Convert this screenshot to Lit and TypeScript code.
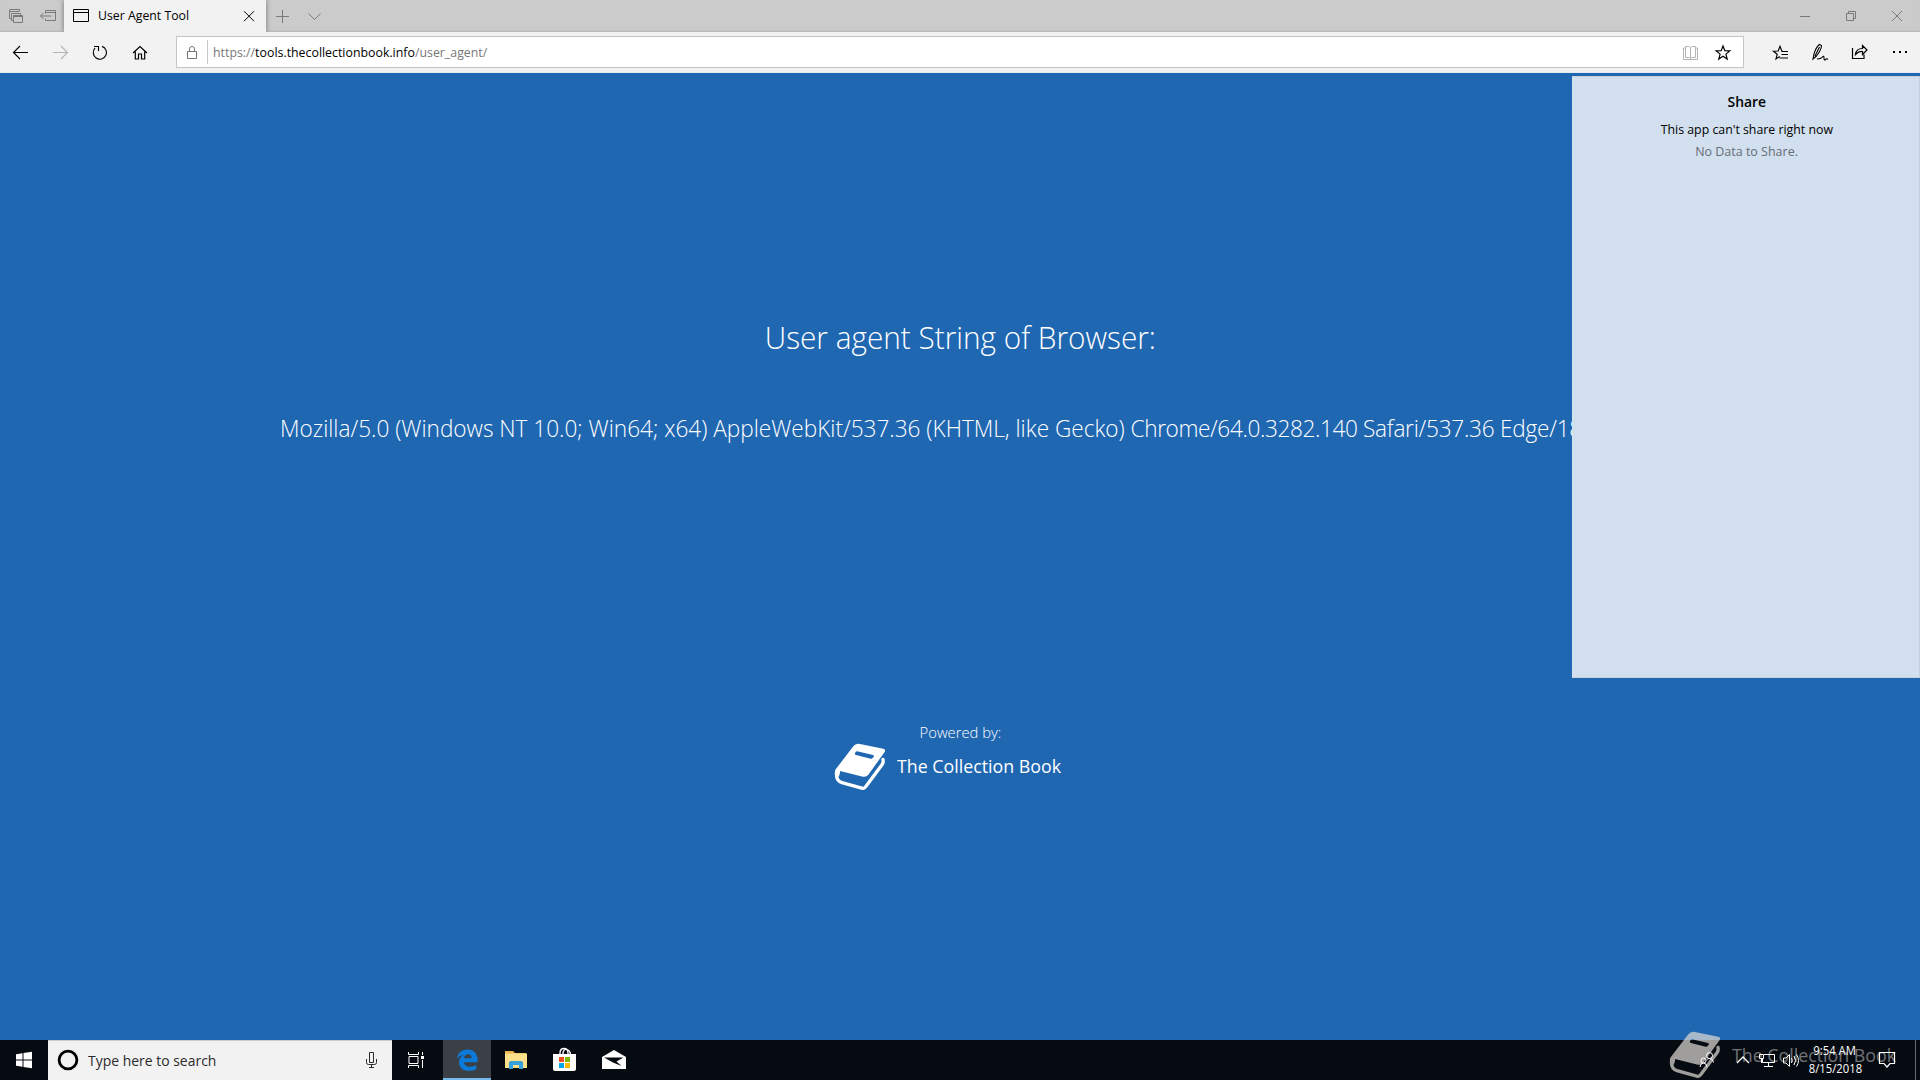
import { LitElement, html, svg, css, type SVGTemplateResult } from "lit";
import { customElement } from "lit/decorators.js";

/* Icons are drawn on the desktop's own pixel grid; x/y is the cell's origin on it. */
const cell = (x: number, y: number, w: number, h: number, body: SVGTemplateResult, cls = "") =>
  html`<svg class="cell ${cls}" width=${w} height=${h} viewBox="${x} ${y} ${w} ${h}">${body}</svg>`;

const book = html`<svg class="book" width="52" height="48" viewBox="102 99 156 144">
  <path fill="currentColor" fill-rule="evenodd" d="M176 101 L250 116 Q258 119 254 126 L205 194 Q199 202 189 200 L120 183 Q122 194 112 206 Q101 194 107 178 L160 109 Q166 100 176 101Z M171 124 Q167 124 165 129 Q163 134 168 135 L212 146 Q217 147 220 142 Q224 137 219 135Z"/>
  <path fill="none" stroke="currentColor" stroke-width="10" stroke-linejoin="round" stroke-linecap="round" d="M110 184 Q106 212 126 218 L188 235 Q193 236 197 230 L246 164 Q251 158 249 148"/>
</svg>`;

@customElement("app-root")
export class AppRoot extends LitElement {
  static styles = css`
    :host { display: block; width: 1920px; height: 1080px; overflow: hidden; font-family: "Open Sans", "Noto Sans", sans-serif; font-size: 12px; color: #000; }
    * { box-sizing: border-box; }
    .desktop { display: flex; flex-direction: column; width: 1920px; height: 1080px; position: relative; }
    .cell { display: block; flex: none; fill: none; stroke: currentColor; stroke-width: 1; }
    .t { white-space: pre; flex: none; }
    .spacer { flex: 1; }
    .tabs { display: flex; height: 32px; background: #cbcbcb; color: #7a7a7a; flex: none; box-shadow: inset 0 -2px 2px -1px #b5b5b5; }
    .tab { display: flex; align-items: center; width: 202px; height: 32px; background: #f2f2f2; color: #000; box-shadow: 0 0 5px rgba(0,0,0,.45); clip-path: inset(0 -6px 0 -6px); }
    .tab .name { width: 136px; padding-bottom: 2px; transform: scaleX(1.025); transform-origin: left; }
    .bar { display: flex; align-items: center; height: 41px; background: #f2f2f2; flex: none; border-bottom: 1px solid #e3ebf3; }
    .dim { color: #b4b4b4; }
    .grey { color: #777; }
    .address { display: flex; align-items: center; width: 1568px; height: 32px; border: 1px solid #c4c4c4; background: #fff; }
    .sep { width: 1px; height: 24px; background: #c8c8c8; margin-right: 5px; }
    .url { color: #777; transform: scaleX(1.029); transform-origin: left; }
    .url b { font-weight: 400; color: #000; }
    .page { flex: 1; background: #2067b2; color: #fff; display: flex; flex-direction: column; align-items: center; overflow: hidden; }
    .head { font-size: 32px; font-weight: 300; line-height: 44px; margin-top: 242px; transform: scaleX(.93); }
    .agent { font-size: 24px; font-weight: 300; line-height: 34px; margin-top: 52px; width: 1360px; transform: scaleX(.941); transform-origin: left; }
    .engine { letter-spacing: -.4px; }
    .build { letter-spacing: -.25px; }
    .powered { font-size: 15px; font-weight: 300; line-height: 20px; margin-top: 277px; transform: scaleX(.985); }
    .brand { display: flex; align-items: center; width: 252px; height: 48px; }
    .brand .book { margin-top: 2px; }
    .brand .t { font-size: 18px; margin-left: 11px; line-height: 24px; transform: scaleX(.988); transform-origin: left; padding-bottom: 1px; }
    .share { position: absolute; left: 1572px; top: 76px; width: 348px; height: 602px; padding-left: 1px; background: #d2dfee; border: 1px solid #c5d0dc; border-left-color: #d5e2ef; display: flex; flex-direction: column; align-items: center; }
    .share h2 { margin: 14px 0 0; font-size: 15px; font-weight: 600; line-height: 20px; transform: scaleX(.925); }
    .share .msg { font-size: 13px; line-height: 20px; margin-top: 8px; transform: scaleX(.948); }
    .share .sub { font-size: 13px; line-height: 20px; margin-top: 2px; color: #656d77; transform: scaleX(.96); }
    .task { display: flex; height: 40px; background: #060a11; color: #fff; flex: none; }
    .search { display: flex; align-items: center; width: 344px; background: #f2f2f2; color: #2b2b2b; border-top: 1px solid #c9ccd0; }
    .search .t { width: 262px; font-size: 15px; padding-bottom: 2px; transform: scaleX(.93); transform-origin: left; }
    .active { background: #3b3f46; box-shadow: inset 0 -2px #76b9ed; }
    .clock { width: 70px; padding-top: 2px; line-height: 18px; display: flex; flex-direction: column; align-items: center; }
    .clock .t { transform: scaleX(.94); }
    .mark { position: absolute; left: 1669px; top: 1031px; display: flex; align-items: center; color: #fff; height: 48px; }
    .mark .book { color: #dcd8d2; opacity: .72; }
    .mark .t { font-size: 18px; opacity: .42; margin-left: 11px; line-height: 24px; transform: scaleX(.988); transform-origin: left; }
    .front { z-index: 1; position: relative; display: flex; }
  `;

  render() {
    return html`<div class="desktop">
      <div class="tabs">
        ${cell(0, 0, 32, 32, svg`<path d="M11.5 18.5h-2v-9h10v2 M10 11.5h9 M13.500 20.5h-2v-7h9v2"/><path d="M13.500 15.5h9v7h-9z M13.500 16.5h9"/>`)}
        ${cell(32, 0, 32, 32, svg`<path d="M45.500 13.500v-3h10v10h-10v-2 M45 12.500h10 M51.500 16h-11 M43.500 13l-3 3 3 3"/>`)}
        <div class="tab">
          ${cell(64, 0, 34, 32, svg`<path d="M73.500 9.500h15v12h-15z M73.500 12.500h15"/>`)}
          <span class="t name">User Agent Tool</span>
          ${cell(234, 0, 32, 32, svg`<path d="M244 11.200l10 10 M254 11.200l-10 10"/>`)}
        </div>
        ${cell(266, 0, 32, 32, svg`<path d="M276 16.500h13 M282.500 10v13"/>`)}
        ${cell(298, 0, 32, 32, svg`<path d="M308.500 13.500l6 6 6-6"/>`)}
        <div class="spacer"></div>
        ${cell(1782, 0, 46, 32, svg`<path d="M1800 16.500h10"/>`)}
        ${cell(1828, 0, 46, 32, svg`<path d="M1846.500 13.500h7v7h-7z M1848.500 13v-1.500h7v7h-2"/>`)}
        ${cell(1874, 0, 46, 32, svg`<path d="M1892 11l10 10 M1902 11l-10 10"/>`)}
      </div>
      <div class="bar">
        ${cell(0, 32, 40, 40, svg`<path stroke-width="1.100" d="M13.500 52.500h14.500 M20 46l-6.500 6.500 6.500 6.500"/>`)}
        ${cell(40, 32, 40, 40, svg`<path stroke-width="1.100" d="M53 52.500h14.500 M61 46l6.500 6.500-6.500 6.500"/>`, "dim")}
        ${cell(80, 32, 40, 40, svg`<path stroke-width="1.150" d="M102 46.400A6.600 6.600 0 1 1 95 48.200"/><path stroke-width="1.150" d="M94 46.500h4.500v4.500"/>`)}
        ${cell(120, 32, 56, 40, svg`<path stroke-width="1.200" d="M133 53l7-6.500 7 6.500 M135.300 51.500v7.500h3.200v-5h3v5h3.200v-7.500"/>`)}
        <div class="address">
          ${cell(177, 37, 30, 30, svg`<path d="M187.500 51.500h9v7h-9z M189.500 51.500v-2.500a2.500 2.500 0 0 1 5 0v2.500"/>`, "grey")}
          <div class="sep"></div>
          <span class="t url">https://<b>tools.thecollectionbook.info</b>/user_agent/</span>
          <div class="spacer"></div>
          ${cell(1674, 37, 32, 30, svg`<path d="M1690.500 47.500q-1-1-2-1h-3v11h3q1.500 0 2 1q.5-1 2-1h3v-11h-3q-1.500 0-2 1v11 M1685.500 48h-2v11.500h14v-11.500h-2"/>`, "dim")}
          ${cell(1706, 37, 37, 30, svg`<path stroke-width="1.200" stroke-linejoin="miter" d="M1723 46l1.800 4.700 5 .2-3.900 3.200 1.300 5-4.200-2.800-4.200 2.800 1.300-5-3.900-3.200 5-.2z"/>`)}
        </div>
        <div class="spacer"></div>
        ${cell(1760, 32, 40, 40, svg`<path stroke-width="1.200" d="M1788 51.500h-6l-2-5.200-1.800 4.700-4.700.2 3.700 3.100-1.200 4.600 3.800-2.500 M1781.500 54.500h6.500 M1779.500 58h8.500"/>`)}
        ${cell(1800, 32, 40, 40, svg`<path stroke-width="1.100" d="M1813 59l1-5q2-7 5.500-9.500l2 1q0 4-5 10.500z M1815 56l4.500-9 M1817 59q4 0 5.500-2t1.500 1 1.500 1.500 2.500 0"/>`)}
        ${cell(1840, 32, 40, 40, svg`<path stroke-width="1.200" d="M1852.500 48v10.500h11.500v-4 M1855.500 54.500q.5-6 7-6v-3l4.500 4.500-4.500 4.500v-3q-4-.5-7 3z"/>`)}
        ${cell(1880, 32, 40, 40, svg`<path fill="currentColor" stroke="none" d="M1893 51h2v2h-2z M1899 51h2v2h-2z M1905 51h2v2h-2z"/>`)}
      </div>
      <div class="page">
        <div class="t head">User agent String of Browser:</div>
        <div class="t agent">Mozilla/5.0 (Windows NT 10.0; Win64; x64) AppleWebKit/537.36 (KHTML, like Gecko) <span class="engine">Chrome/64.0.3282.140 </span><span class="build">Safari/537.36 Edge/18</span></div>
        <div class="t powered">Powered by:</div>
        <div class="brand">${book}<span class="t">The Collection Book</span></div>
      </div>
      <div class="task">
        ${cell(0, 1040, 48, 40, svg`<path fill="currentColor" stroke="none" d="M16 1054.200l6.500-1v6.300h-6.500z M23.500 1053l8.500-1.200v7.700h-8.500z M16 1060.500h6.500v6.300l-6.500-1z M23.500 1060.500h8.500v7.700l-8.500-1.200z"/>`)}
        <div class="search">
          ${cell(48, 1041, 40, 39, svg`<circle cx="68" cy="1060" r="8.900" stroke="#000" stroke-width="2.800"/>`)}
          <span class="t">Type here to search</span>
          ${cell(350, 1041, 42, 39, svg`<path d="M369.500 1052.500h4v10h-4z M366.500 1059v3.500q0 2 2 2h6q2 0 2-2v-3.500 M371.500 1065v2.500 M369 1067.500h5"/>`)}
        </div>
        ${cell(392, 1040, 51, 40, svg`<path d="M409 1056.500h9v7h-9z M408.500 1052v2.500h10v-2.500 M408.500 1068v-2.500h10v2.500 M422.500 1052v3 M422.500 1060v8"/><path fill="#fff" stroke="none" d="M421 1056h3v3h-3z"/>`)}
        ${cell(443, 1040, 48, 40, svg`<path fill="#0c7ad8" stroke="none" d="M457 1058.500C458 1052.500 462.200 1049.500 467.500 1049.500C473.500 1049.500 477.600 1053.500 477.600 1059.500V1062.300H464C464.200 1065.500 467 1066.800 470 1066.800Q473.500 1066.800 476.300 1065V1069.200Q473 1070.800 469 1070.800C462.500 1070.800 459 1067 459 1062.200Q459 1057.300 463.800 1054.800Q459.500 1055.300 457 1058.500Z M464.200 1058.300H471.600C471.600 1055.800 470.500 1054.200 468 1054.200C465.500 1054.200 464.400 1056.200 464.200 1058.300Z" fill-rule="evenodd"/>`, "active")}
        ${cell(491, 1040, 48, 40, svg`<g stroke="none"><path fill="#e8b84f" d="M505 1051h8l2 2h11v3h-21z"/><path fill="#fbe08c" d="M505 1053.500h22v14.500h-22z"/><path fill="#36a0dc" d="M509 1069v-6q0-2 2-2h10q2 0 2 2v6h-4v-4h-6v4z"/></g>`)}
        ${cell(539, 1040, 48, 40, svg`<path stroke-width="1.300" d="M560 1054v-1q0-4.500 4-4.500t4 4.500v1 M563 1054v-1.500q1-4 4-3t3.500 4.500"/><g stroke="none"><path fill="#fff" d="M553 1054h23v15q0 2-2 2h-19q-2 0-2-2z"/><path fill="#f05022" d="M559 1057h5v5h-5z"/><path fill="#7fba00" d="M565 1057h5v5h-5z"/><path fill="#03a4ee" d="M559 1063h5v5h-5z"/><path fill="#ffb901" d="M565 1063h5v5h-5z"/></g>`)}
        ${cell(587, 1040, 48, 40, svg`<path fill="#fff" stroke="none" d="M602 1057l12-7 12 7v12h-24z"/><path fill="#060a11" stroke="none" d="M604 1057.500h19.500l-7 4 5 4.500-8.500-3.500z"/>`)}
        <div class="spacer"></div>
        <div class="front">
        ${cell(1690, 1040, 36, 40, svg`<circle cx="1709.500" cy="1055.500" r="3"/><circle cx="1703.500" cy="1060.500" r="2.500"/><path d="M1700 1067q.5-4 3.500-4t3.500 4 M1706.500 1060q1-1.500 3-1.500 3.500 0 4 4"/>`)}
        ${cell(1726, 1040, 28, 40, svg`<path stroke-width="1.300" d="M1737 1063l6-6 6 6"/>`)}
        ${cell(1754, 1040, 26, 40, svg`<path d="M1764 1054.500h10.500v8h-12v-4 M1768.500 1063v3.500 M1764 1066.500h9 M1759.500 1054.500h4v4h-4z M1761.500 1058.500v4.500"/>`)}
        ${cell(1780, 1040, 20, 40, svg`<path d="M1783.500 1058h2.500l3.500-3.500v12l-3.500-3.500h-2.500z M1791.500 1058q1.500 2.500 0 5 M1794 1056q3 4.500 0 9 M1796.500 1054.500q4 6 0 12"/>`)}
        <div class="clock"><span class="t">9:54 AM</span><span class="t">8/15/2018</span></div>
        ${cell(1870, 1040, 50, 40, svg`<path stroke-width="1.200" d="M1879.500 1052.500h15v11h-4.500l-3 3.500-3-3.500h-4.500z"/><path stroke="#666a70" d="M1915.500 1040v40"/>`)}
        </div>
      </div>
      <aside class="share">
        <h2 class="t">Share</h2>
        <div class="t msg">This app can't share right now</div>
        <div class="t sub">No Data to Share.</div>
      </aside>
      <div class="mark">${book}<span class="t">The Collection Book</span></div>
    </div>`;
  }
}
